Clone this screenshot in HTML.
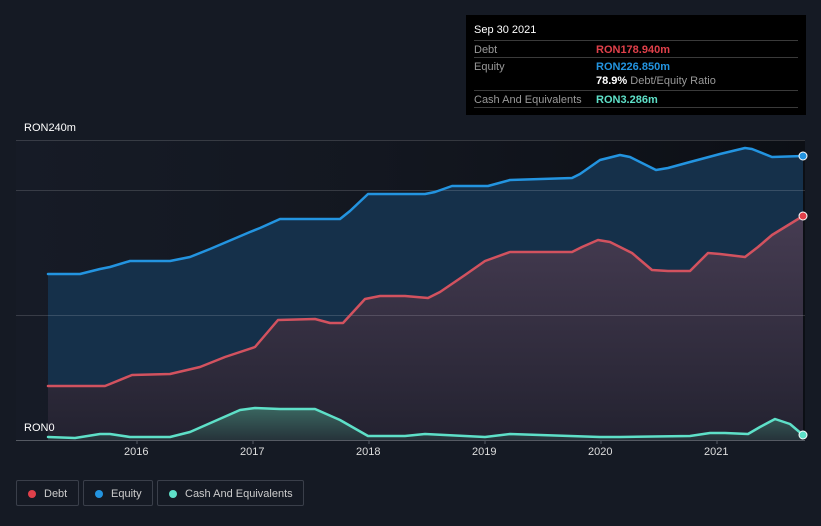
<!DOCTYPE html>
<html><head><meta charset="utf-8"><style>
body{margin:0;width:821px;height:526px;background:#151a24;font-family:"Liberation Sans",sans-serif;overflow:hidden;position:relative}
.t{position:absolute;color:#fff;font-size:11px}
.ax{position:absolute;color:#ddd;font-size:11px}
.tip{position:absolute;left:466px;top:15px;width:340px;height:100px;background:#000;font-size:11px}
.tip .row{position:absolute;left:8px;right:8px;border-top:1px solid #3a3a3a;height:17px}
.tip .l{position:absolute;left:0;top:3px;color:#999}
.tip .v{position:absolute;left:122px;top:3px;font-weight:bold}
.leg{position:absolute;top:480px;height:26px;border:1px solid #3a3f4a;border-radius:2px;color:#ccc;font-size:11px;line-height:26px;box-sizing:border-box}
.leg i{position:absolute;left:11px;top:9px;width:8px;height:8px;border-radius:50%}
.leg span{position:absolute;left:27px}
</style></head><body>
<svg width="821" height="526" style="position:absolute;left:0;top:0">
<defs>
<linearGradient id="bg" x1="0" x2="1" y1="0" y2="0"><stop offset="0" stop-color="#161b26"/><stop offset="0.45" stop-color="#131720"/><stop offset="1" stop-color="#0c0f15"/></linearGradient>
<linearGradient id="dg" x1="0" x2="0" y1="0" y2="1"><stop offset="0" stop-color="#463c52"/><stop offset="1" stop-color="#232230"/></linearGradient>
<linearGradient id="cg" x1="0" x2="0" y1="0" y2="1"><stop offset="0" stop-color="#3a6660"/><stop offset="1" stop-color="#26333a"/></linearGradient>
</defs>
<rect x="16" y="140" width="789" height="300" fill="url(#bg)"/>
<polygon fill="#15304a" points="48,440 48,274 80,274 100,269 110,267 130,261 170,261 190,257 210,249 250,232 260,228 280,219 340,219 350,211 368,194 425,194 435,192 452,186 488,186 510,180 572,178 580,174 600,160 620,155 630,157 656,170 668,168 690,162 720,154 745,148 752,149 772,157 803,156 803,440"/>
<polygon fill="url(#dg)" points="48,440 48,386 105,386 110,384 132,375 170,374 200,367 225,357 255,347 278,320 315,319 330,323 343,323 365,299 380,296 405,296 428,298 440,292 465,275 485,261 510,252 572,252 582,247 598,240 610,242 632,253 652,270 668,271 690,271 708,253 720,254 745,257 758,247 772,235 803,216 803,440"/>
<polygon fill="url(#cg)" points="48,440 48,437 75,438 100,434 110,434 130,437 170,437 190,432 240,410 255,408 280,409 315,409 340,420 368,436 405,436 425,434 445,435 485,437 510,434 540,435 600,437 620,437 690,436 710,433 725,433 748,434 760,427 775,419 790,424 803,435 803,440"/>
<g stroke="#ffffff" stroke-opacity="0.15" stroke-width="1">
<line x1="16" x2="805" y1="140.5" y2="140.5"/><line x1="16" x2="805" y1="190.5" y2="190.5"/><line x1="16" x2="805" y1="315.5" y2="315.5"/></g>
<line x1="16" x2="805" y1="440.5" y2="440.5" stroke="#555a63"/>
<g fill="none" stroke-width="2.5" stroke-linejoin="round" stroke-linecap="round">
<polyline stroke="#2394e0" points="48,274 80,274 100,269 110,267 130,261 170,261 190,257 210,249 250,232 260,228 280,219 340,219 350,211 368,194 425,194 435,192 452,186 488,186 510,180 572,178 580,174 600,160 620,155 630,157 656,170 668,168 690,162 720,154 745,148 752,149 772,157 803,156"/>
<polyline stroke="#d2525f" points="48,386 105,386 110,384 132,375 170,374 200,367 225,357 255,347 278,320 315,319 330,323 343,323 365,299 380,296 405,296 428,298 440,292 465,275 485,261 510,252 572,252 582,247 598,240 610,242 632,253 652,270 668,271 690,271 708,253 720,254 745,257 758,247 772,235 803,216"/>
<polyline stroke="#5ee0c8" points="48,437 75,438 100,434 110,434 130,437 170,437 190,432 240,410 255,408 280,409 315,409 340,420 368,436 405,436 425,434 445,435 485,437 510,434 540,435 600,437 620,437 690,436 710,433 725,433 748,434 760,427 775,419 790,424 803,435"/>
</g>
<circle cx="803" cy="156" r="4" fill="#2394e0" stroke="#fff" stroke-width="1"/>
<circle cx="803" cy="216" r="4" fill="#e0404a" stroke="#fff" stroke-width="1"/>
<circle cx="803" cy="435" r="4" fill="#5ee0c8" stroke="#fff" stroke-width="1"/>
<g stroke="#555a63"><line x1="137" x2="137" y1="440" y2="444"/><line x1="253" x2="253" y1="440" y2="444"/><line x1="369" x2="369" y1="440" y2="444"/><line x1="485" x2="485" y1="440" y2="444"/><line x1="601" x2="601" y1="440" y2="444"/><line x1="717" x2="717" y1="440" y2="444"/></g>
</svg>
<div class="t" style="left:24px;top:122px">RON240m</div>
<div class="t" style="left:24px;top:422px">RON0</div>
<div class="ax" style="left:124px;top:446px">2016</div>
<div class="ax" style="left:240px;top:446px">2017</div>
<div class="ax" style="left:356px;top:446px">2018</div>
<div class="ax" style="left:472px;top:446px">2019</div>
<div class="ax" style="left:588px;top:446px">2020</div>
<div class="ax" style="left:704px;top:446px">2021</div>
<div class="tip">
<div style="position:absolute;left:8px;top:9px;color:#fff">Sep 30 2021</div>
<div class="row" style="top:25px"><span class="l">Debt</span><span class="v" style="color:#e0404a">RON178.940m</span></div>
<div class="row" style="top:42px"><span class="l">Equity</span><span class="v" style="color:#2394e0">RON226.850m</span></div>
<div style="position:absolute;left:130px;top:60px;color:#999"><b style="color:#fff">78.9%</b> Debt/Equity Ratio</div>
<div class="row" style="top:75px"><span class="l">Cash And Equivalents</span><span class="v" style="color:#5ee0c8">RON3.286m</span></div>
<div class="row" style="top:92px;height:0"></div>
</div>
<div class="leg" style="left:16px;width:63px"><i style="background:#e0404a"></i><span>Debt</span></div>
<div class="leg" style="left:83px;width:70px"><i style="background:#2394e0"></i><span>Equity</span></div>
<div class="leg" style="left:157px;width:147px"><i style="background:#5ee0c8"></i><span>Cash And Equivalents</span></div>
</body></html>
